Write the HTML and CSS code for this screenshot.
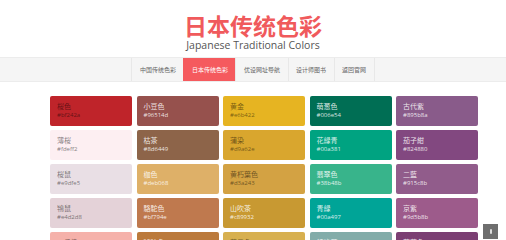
FILE: index.html
```html
<!DOCTYPE html>
<html lang="zh">
<head>
<meta charset="utf-8">
<title>日本传统色彩</title>
<link rel="stylesheet" href="styles.css">
</head>
<body>
<header class="header">
  <h1 class="title">日本传统色彩</h1>
  <p class="subtitle">Japanese Traditional Colors</p>
</header>
<nav class="nav">
  <a class="nav-item" href="#">中国传统色彩</a>
  <a class="nav-item active" href="#">日本传统色彩</a>
  <a class="nav-item" href="#">优设网址导航</a>
  <a class="nav-item" href="#">设计师图书</a>
  <a class="nav-item" href="#">返回官网</a>
</nav>
<main class="grid">
  <div class="card dark-text" style="background:#bf242a"><span class="name">桜色</span><span class="hex">#bf242a</span></div>
  <div class="card" style="background:#96514d"><span class="name">小豆色</span><span class="hex">#96514d</span></div>
  <div class="card dark-text" style="background:#e6b422"><span class="name">黄金</span><span class="hex">#e6b422</span></div>
  <div class="card" style="background:#006e54"><span class="name">萌葱色</span><span class="hex">#006e54</span></div>
  <div class="card" style="background:#895b8a"><span class="name">古代紫</span><span class="hex">#895b8a</span></div>

  <div class="card dark-text" style="background:#fdeff2"><span class="name">薄桜</span><span class="hex">#fdeff2</span></div>
  <div class="card" style="background:#8d6449"><span class="name">枯茶</span><span class="hex">#8d6449</span></div>
  <div class="card dark-text" style="background:#d9a62e"><span class="name">蒲染</span><span class="hex">#d9a62e</span></div>
  <div class="card" style="background:#00a381"><span class="name">花緑青</span><span class="hex">#00a381</span></div>
  <div class="card" style="background:#824880"><span class="name">茄子紺</span><span class="hex">#824880</span></div>

  <div class="card dark-text" style="background:#e9dfe5"><span class="name">桜鼠</span><span class="hex">#e9dfe5</span></div>
  <div class="card" style="background:#deb068"><span class="name">枷色</span><span class="hex">#deb068</span></div>
  <div class="card dark-text" style="background:#d3a243"><span class="name">黄朽葉色</span><span class="hex">#d3a243</span></div>
  <div class="card" style="background:#38b48b"><span class="name">翡翠色</span><span class="hex">#38b48b</span></div>
  <div class="card" style="background:#915c8b"><span class="name">二藍</span><span class="hex">#915c8b</span></div>

  <div class="card dark-text" style="background:#e4d2d8"><span class="name">鴇鼠</span><span class="hex">#e4d2d8</span></div>
  <div class="card" style="background:#bf794e"><span class="name">駱駝色</span><span class="hex">#bf794e</span></div>
  <div class="card" style="background:#c89932"><span class="name">山吹茶</span><span class="hex">#c89932</span></div>
  <div class="card" style="background:#00a497"><span class="name">青緑</span><span class="hex">#00a497</span></div>
  <div class="card" style="background:#9d5b8b"><span class="name">京紫</span><span class="hex">#9d5b8b</span></div>

  <div class="card dark-text" style="background:#f5b1aa"><span class="name">一斤染</span><span class="hex">#f5b1aa</span></div>
  <div class="card" style="background:#bb7a3c"><span class="name">琥珀色</span><span class="hex">#bf783a</span></div>
  <div class="card dark-text" style="background:#d7b04f"><span class="name">芥子色</span><span class="hex">#d0af4c</span></div>
  <div class="card" style="background:#82aca9"><span class="name">錆浅葱</span><span class="hex">#80aba9</span></div>
  <div class="card" style="background:#7b3f73"><span class="name">葡萄色</span><span class="hex">#7b3f73</span></div>
</main>
<a class="to-top" href="#" aria-label="返回顶部"><span class="to-top-bar"></span></a>
</body>
</html>
```

FILE: styles.css
```css
* { box-sizing: border-box; }
html, body { margin: 0; padding: 0; }
body {
  background: #fff;
  font-family: "Noto Sans CJK SC", "Open Sans", sans-serif;
  color: #555;
  overflow: hidden;
  height: 240px;
}
.header {
  text-align: center;
  padding-top: 13px;
  height: 57px;
}
.title {
  margin: 0;
  font-size: 23px;
  line-height: 24px;
  font-weight: 700;
  color: #f05a5c;
}
.subtitle {
  margin: 2px 0 0;
  font-family: "Open Sans", "Noto Sans CJK SC", sans-serif;
  font-size: 10.5px;
  line-height: 13px;
  color: #555;
}
.nav {
  display: flex;
  justify-content: center;
  height: 25px;
  background: #f5f5f5;
  border-top: 1px solid #ececec;
  border-bottom: 1px solid #ececec;
}
.nav-item {
  display: flex;
  align-items: center;
  padding: 0 7.5px;
  font-size: 6px;
  color: #666;
  text-decoration: none;
  border-left: 1px solid #e8e8e8;
}
.nav-item:last-child { border-right: 1px solid #e8e8e8; }
.nav-item.active {
  background: #f55a5e;
  color: #fff;
  border-color: #f55a5e;
}
.grid {
  display: grid;
  grid-template-columns: repeat(5, 82px);
  grid-auto-rows: 30px;
  column-gap: 4.5px;
  row-gap: 4px;
  padding: 14px 0 0 50px;
}
.card {
  border-radius: 2px;
  padding: 6px 7px;
  display: flex;
  flex-direction: column;
  color: rgba(255, 255, 255, 0.85);
}
.card.dark-text { color: rgba(0, 0, 0, 0.5); }
.name {
  font-size: 7px;
  line-height: 9px;
}
.hex {
  font-family: "Open Sans", sans-serif;
  font-size: 6px;
  line-height: 8px;
}
.to-top {
  position: fixed;
  right: 8px;
  bottom: 1px;
  width: 15px;
  height: 15px;
  background: #6e6e6e;
  display: flex;
  align-items: center;
  justify-content: center;
}
.to-top-bar {
  width: 2px;
  height: 5px;
  background: #ddd;
  border-radius: 1px;
}
```
